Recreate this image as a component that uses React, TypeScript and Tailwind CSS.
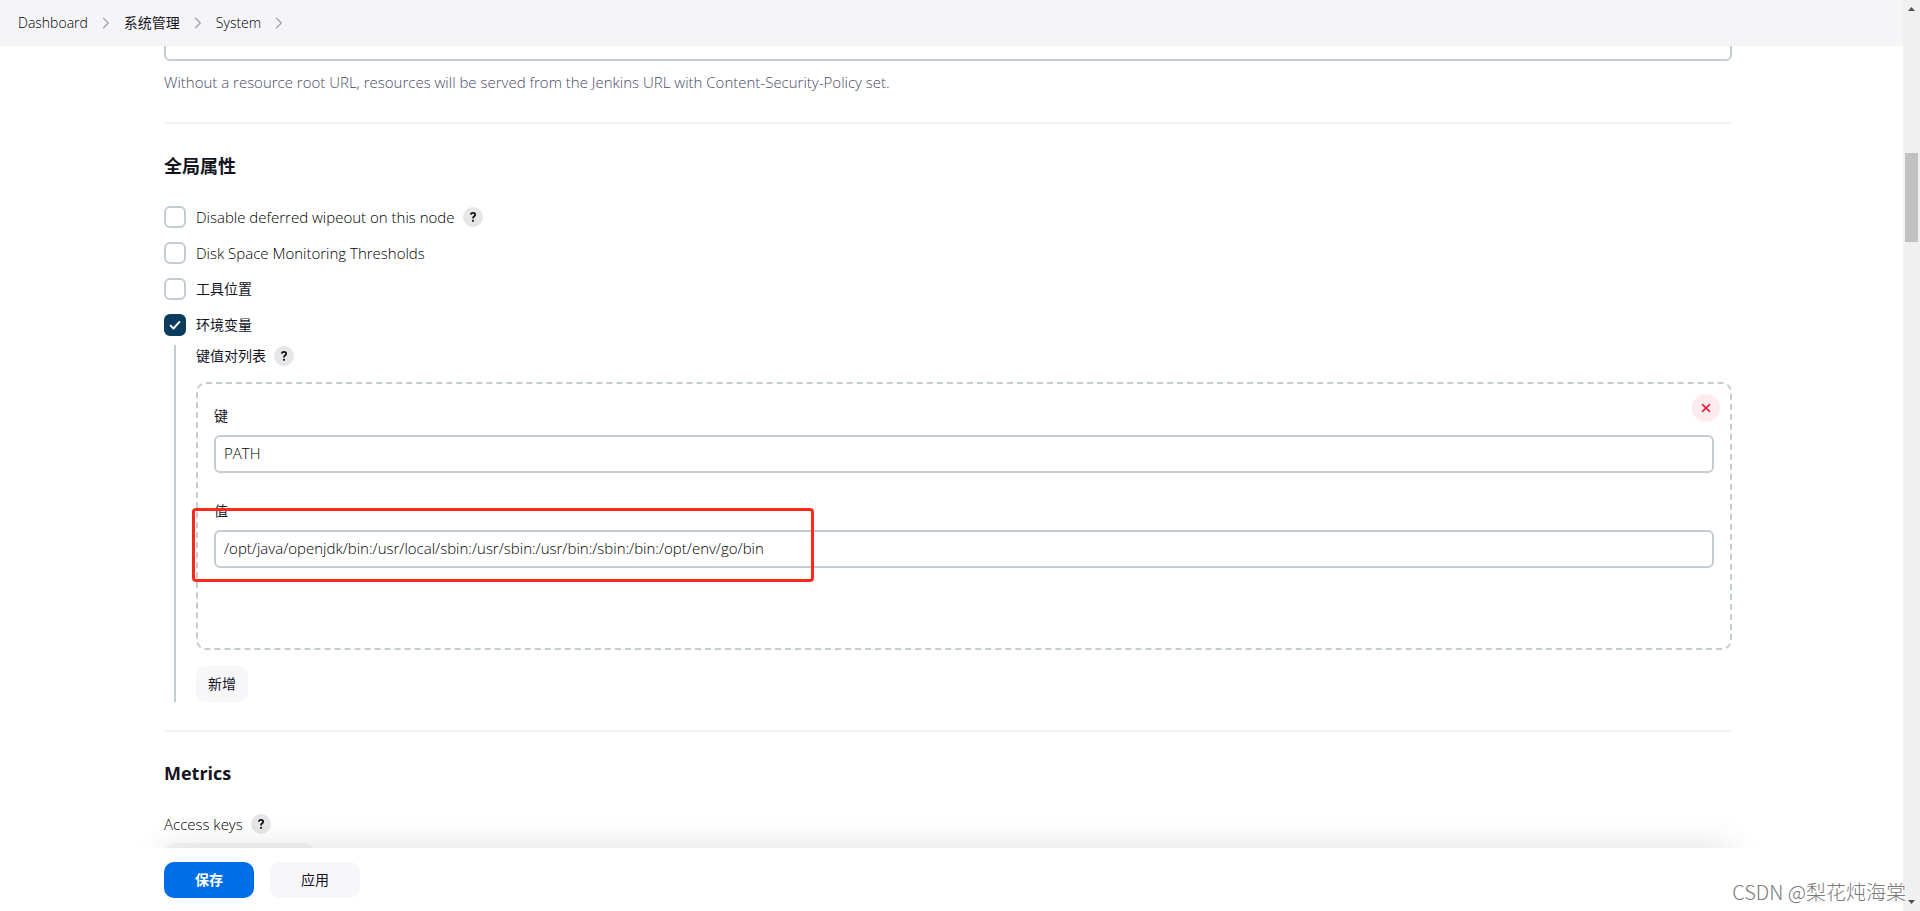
import { FC, ReactNode, useState } from 'react'

const FONT = "font-['Open_Sans','Noto_Sans_CJK_SC',sans-serif]";

const crumbs = [
    { label: 'Dashboard', className: 'font-light text-black' },
    { label: '系统管理', className: '' },
    { label: 'System', className: 'font-light text-black' },
];

const HelpButton: FC<{ topic: string }> = ({ topic }) => (
    <button
        type="button"
        aria-label={`Help: ${topic}`}
        className="flex size-5 items-center justify-center rounded-full bg-[#e6e6e6]"
    >
        <svg viewBox="0 0 20 20" className="size-5" fill="none" stroke="#14141f" strokeWidth="1.8">
            <path d="M7.8 7.6C7.9 6.3 8.7 5.800 10 5.800c1.300 0 2.200.7 2.200 1.800 0 1-.6 1.500-1.200 2-.7.5-1 .9-1 1.800" />
            <circle cx="10" cy="13.800" r="1.100" fill="#14141f" stroke="none" />
        </svg>
    </button>
)

interface CheckRowProps {
    id: string;
    checked?: boolean;
    label: ReactNode;
    children?: ReactNode;
}

const CheckRow: FC<CheckRowProps> = ({ id, label, checked = false, children }) => {
    const [on, setOn] = useState(checked);

    return (
        <div className="flex h-[22px] items-center">
            <span className="relative flex size-[22px]">
                <input
                    id={id}
                    type="checkbox"
                    checked={on}
                    onChange={() => setOn(!on)}
                    className="size-[22px] appearance-none rounded-md border-2 border-[#c3ccd1] bg-white checked:border-[#0b3c5d] checked:bg-[#0b3c5d]"
                />
                {on &&
                    <svg viewBox="0 0 22 22" className="pointer-events-none absolute inset-0 size-[22px]" fill="none" stroke="#fff" strokeWidth="1.9" strokeLinecap="round" strokeLinejoin="round">
                        <path d="M6.6 11.6l2.9 2.9 5.9-6.6" />
                    </svg>
                }
            </span>
            <label htmlFor={id} className="mr-2 flex pl-[10px] leading-5">{label}</label>
            {children}
        </div>
    )
}

const Field: FC<{ id: string; label: string; value: string }> = ({ id, label, value }) => (
    <div>
        <label htmlFor={id} className="block leading-5">{label}</label>
        <input
            id={id}
            defaultValue={value}
            className="mt-[9px] block h-[38px] w-full rounded-md border-2 border-[#c3ccd1] bg-white px-2 pb-[2px] text-[15px] font-light text-black"
        />
    </div>
)

const Divider = () => <hr className="h-[2px] border-0 bg-[#f3f3f8]" />

const Scrollbar = () => (
    <div aria-hidden="true" className="flex w-[17px] shrink-0 flex-col items-center bg-[#f0f0f0]">
        <svg viewBox="0 0 17 17" className="size-[17px]" fill="#505050"><path d="M5 11h7L8.5 7z" /></svg>
        <div className="mt-[136px] h-[89px] w-[13px] bg-[#c1c1c1]" />
        <svg viewBox="0 0 17 17" className="mt-auto size-[17px]" fill="#505050"><path d="M5 6h7l-3.500 4z" /></svg>
    </div>
)

const App: FC = () => (
    <div className={`relative flex h-screen overflow-hidden bg-white text-sm text-[#14141f] ${FONT}`}>
        <div className="flex min-w-0 flex-1 flex-col">
            <nav className="flex h-[46px] shrink-0 items-center bg-[#f5f5f8] pl-[18px]">
                {crumbs.map(({ label, className }) => (
                    <span key={label} className="flex items-center leading-5">
                        <a href="#" className={className}>{label}</a>
                        <svg viewBox="0 0 8 12" className="mx-[14px] h-3 w-2" fill="none" stroke="#a3a3b3" strokeWidth="1.4" strokeLinecap="round" strokeLinejoin="round">
                            <path d="M1.500 1.200L6.300 6l-4.800 4.800" />
                        </svg>
                    </span>
                ))}
            </nav>

            <main className="min-h-0 flex-1 overflow-hidden pr-[171px] pl-[164px]">
                <input
                    aria-label="Resource Root URL"
                    className="-mt-[23px] block h-[38px] w-full rounded-md border-2 border-[#c3ccd1] bg-white px-2"
                />
                <p className="mt-[11px] mb-[30px] text-[15px] leading-5 font-light text-[#4a4a68]">
                    Without a resource root URL, resources will be served from the Jenkins URL with Content-Security-Policy set.
                </p>
                <Divider />

                <h2 className="mt-[30px] mb-7 text-lg leading-6 font-bold">全局属性</h2>
                <div className="flex flex-col gap-[14px]">
                    <CheckRow
                        id="wipeout"
                        label={<span className="text-[15px] font-light text-black">Disable deferred wipeout on this node</span>}
                    >
                        <HelpButton topic="Disable deferred wipeout on this node" />
                    </CheckRow>
                    <CheckRow
                        id="disk-space"
                        label={<span className="text-[15px] font-light text-black">Disk Space Monitoring Thresholds</span>}
                    />
                    <CheckRow id="tools" label="工具位置" />
                    <CheckRow id="env" label="环境变量" checked />
                </div>

                <div className="mt-[9px] mb-7 ml-[10px] border-l-2 border-[#c3ccd1] pl-5">
                    <div className="flex h-[22px] items-center gap-2">
                        <span className="leading-5">键值对列表</span>
                        <HelpButton topic="键值对列表" />
                    </div>

                    <div className="relative mt-[15px] flex flex-col gap-7 rounded-[10px] border-2 border-dashed border-[#c3ccd1] px-4 pt-[22px] pb-20">
                        <button
                            type="button"
                            aria-label="Delete"
                            className="absolute top-[10px] right-[10px] flex size-7 items-center justify-center rounded-full bg-[#fdebed]"
                        >
                            <svg viewBox="0 0 10 10" className="size-[10px]" fill="none" stroke="#e6001f" strokeWidth="1.500">
                                <path d="M1.200 1.200l7.600 7.600M8.800 1.200L1.200 8.800" />
                            </svg>
                        </button>
                        <Field id="env-key" label="键" value="PATH" />
                        <Field id="env-value" label="值" value="/opt/java/openjdk/bin:/usr/local/sbin:/usr/sbin:/usr/bin:/sbin:/bin:/opt/env/go/bin" />
                        {/* red marker around the value */}
                        <div className="pointer-events-none absolute top-[124px] -left-[6px] h-[74px] w-[622px] rounded-[4px] border-3 border-[#ff2819]" />
                    </div>

                    <button type="button" className="mt-4 block h-9 rounded-[10px] bg-[#f7f7fa] px-3">新增</button>
                </div>
                <Divider />

                <h2 className="mt-[29px] mb-7 text-lg leading-6 font-bold">Metrics</h2>
                <div className="flex h-[22px] items-center gap-2">
                    <span className="text-[15px] leading-5 font-light text-black">Access keys</span>
                    <HelpButton topic="Access keys" />
                </div>
                <button type="button" aria-label="Access key" className="mt-2 block h-9 w-[150px] rounded-[10px] bg-[#f7f7fa]" />
            </main>

            <footer className="relative h-[63px] shrink-0 pr-[171px] pl-[164px]">
                <div className="h-full shadow-[0_0_34px_rgba(0,0,0,0.13)]" />
                <div className="absolute inset-0 flex gap-4 bg-white pt-[14px] pl-[164px]">
                    <button type="button" className="h-9 w-[90px] rounded-[10px] bg-[#006ee6] font-bold text-white">保存</button>
                    <button type="button" className="h-9 w-[90px] rounded-[10px] bg-[#f7f7fa]">应用</button>
                </div>
            </footer>
        </div>

        <Scrollbar />

        <div className="absolute right-[14px] bottom-[7px] font-['Noto_Sans_CJK_SC',sans-serif] text-xl leading-6 font-light text-[#7a7a7a] [text-shadow:1px_1px_0_#fff]">
            CSDN @梨花炖海棠
        </div>
    </div>
)

export default App
